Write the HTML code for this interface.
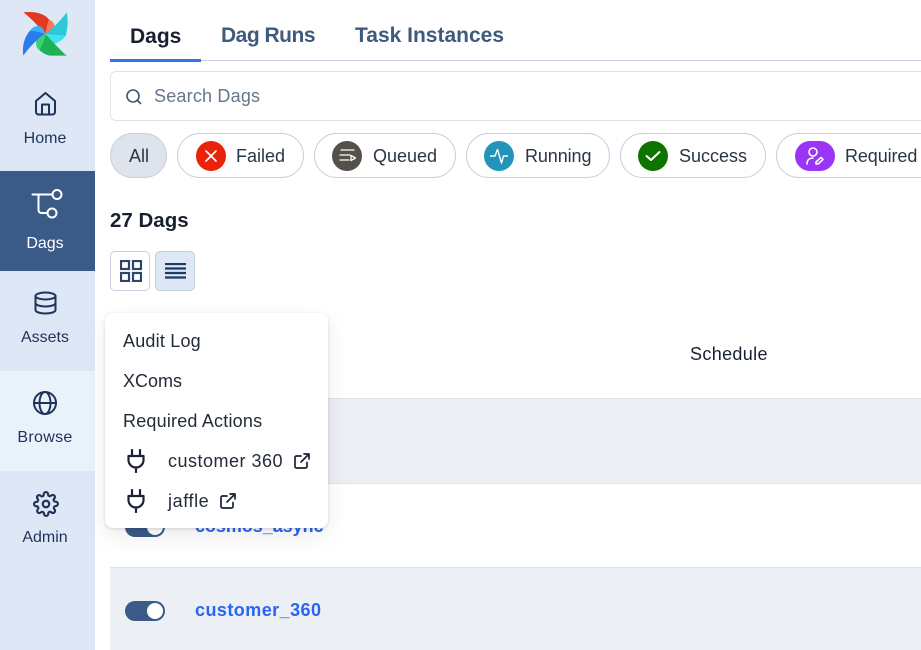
<!DOCTYPE html>
<html><head><meta charset="utf-8"><style>
html,body{margin:0;padding:0;background:#fff}
body{width:921px;height:650px;overflow:hidden;position:relative;font-family:"Liberation Sans",sans-serif;color:#1a2233}
.a{position:absolute;white-space:nowrap}
.side{position:absolute;left:0;width:95px;text-align:center;color:#1f3358;font-size:16px}
.side span{position:absolute;left:0;width:90px;text-align:center}
.side svg{position:absolute;left:33px;fill:none;stroke:currentColor;stroke-width:2;stroke-linecap:round;stroke-linejoin:round}
.pill{position:absolute;top:133px;height:43px;border:1px solid #c7d0de;border-radius:23px;background:#fff}
.pill i{position:absolute;top:7px;left:17px;width:30px;height:30px;border-radius:15px;display:block}
.pill i svg{position:absolute;left:6px;top:6px;fill:none;stroke:#fff;stroke-width:2;stroke-linecap:round;stroke-linejoin:round}
.pill b{position:absolute;top:12px;font-weight:400;font-size:18px;color:#2a3545;white-space:nowrap;line-height:20px}
.mi{position:absolute;left:18px;font-size:18px;color:#232b3a;white-space:nowrap;line-height:20px;letter-spacing:.2px}
.pl{position:absolute;left:20px;fill:none;stroke:#1a2233;stroke-width:2.200;stroke-linecap:round;stroke-linejoin:round}
.ext{position:absolute;fill:none;stroke:#1a2233;stroke-width:1.700;stroke-linecap:round;stroke-linejoin:round}
.tog{position:absolute;left:125px;width:40px;height:20px;border-radius:10px;background:#3a5a87}
.tog:after{content:"";position:absolute;right:2px;top:2px;width:16px;height:16px;border-radius:8px;background:#fff}
.link{position:absolute;left:195px;font-size:18px;font-weight:700;color:#2864f5;white-space:nowrap;line-height:20px;letter-spacing:.45px}
</style></head><body>

<div class="a" style="left:0;top:0;width:95px;height:650px;background:#dee7f6"></div>
<div class="a" style="left:0;top:171px;width:95px;height:100px;background:#3a5a87"></div>
<div class="a" style="left:0;top:371px;width:95px;height:100px;background:#e9f1fb"></div>

<svg class="a" style="left:0;top:0" width="95" height="70" viewBox="0 0 285 210">
<path d="M136 102C118 82 95 55 70 37C105 33 132 40 147 58C142 75 139 90 136 102Z" fill="#e43921"/>
<path d="M136 102C139 90 142 75 147 58C157 63 165 72 164 80C160 90 150 97 136 102Z" fill="#ff7557"/>
<path d="M136 102C150 90 178 68 200 37C205 60 203 85 197 108C178 106 155 104 136 102Z" fill="#2fc6d6"/>
<path d="M136 102L197 108C188 120 172 130 158 133C150 122 143 112 136 102Z" fill="#3ee4ee"/>
<path d="M136 102C155 122 178 148 200 167L150 167C138 165 126 158 118 150C126 135 133 118 136 102Z" fill="#1fb254"/>
<path d="M136 102C133 118 126 135 118 150C110 145 106 135 109 123C118 113 128 107 136 102Z" fill="#37d46c"/>
<path d="M136 102C118 112 90 138 70 167C66 140 72 112 90 92C108 93 125 97 136 102Z" fill="#2b7bef"/>
<path d="M136 102C125 97 108 93 90 92C98 80 112 74 124 81C131 87 134 95 136 102Z" fill="#3eb0f5"/>
</svg>

<div class="side" style="top:0;height:171px">
<svg style="top:91px" width="25" height="25" viewBox="0 0 25 25"><path d="M3 10L12.500 2 22 10V21a2.500 2.500 0 0 1-2.500 2.500h-14A2.500 2.500 0 0 1 3 21z"/><path d="M9 23.500v-10h7v10"/></svg>
<span style="top:130px;line-height:18px">Home</span></div>
<div class="side" style="top:171px;height:100px;color:#fff">
<svg style="top:17px;left:30px" width="36" height="36" viewBox="0 0 36 36"><path d="M2.500 6.500H22"/><path d="M8.500 7v15a3 3 0 0 0 3 3H17"/><circle cx="27" cy="6.500" r="4.500"/><circle cx="22" cy="25" r="4.500"/></svg>
<span style="top:64px;line-height:18px">Dags</span></div>
<div class="side" style="top:271px;height:100px">
<svg style="top:20px" width="24" height="24" viewBox="0 0 24 24"><ellipse cx="12.500" cy="5" rx="10" ry="3.500"/><path d="M2.500 5v14c0 2 4.500 3.500 10 3.500s10-1.500 10-3.500V5"/><path d="M2.500 12c0 2 4.500 3.500 10 3.500s10-1.500 10-3.500"/></svg>
<span style="top:58px;line-height:18px">Assets</span></div>
<div class="side" style="top:371px;height:100px">
<svg style="top:20px" width="24" height="24" viewBox="0 0 24 24"><circle cx="12" cy="12" r="11"/><path d="M1 12h22"/><ellipse cx="12" cy="12" rx="5.500" ry="11"/></svg>
<span style="top:58px;line-height:18px;letter-spacing:.3px">Browse</span></div>
<div class="side" style="top:471px;height:100px">
<svg style="top:20px" width="26" height="26" viewBox="0 0 24 24"><circle cx="12" cy="12" r="3"/><path d="M19.400 15a1.650 1.650 0 0 0 .33 1.820l.06.06a2 2 0 1 1-2.830 2.830l-.06-.06a1.650 1.650 0 0 0-2.800 1.170V21a2 2 0 1 1-4 0v-.09A1.650 1.650 0 0 0 7.300 19.700l-.06.06a2 2 0 1 1-2.830-2.830l.06-.06a1.650 1.650 0 0 0-1.170-2.800H3a2 2 0 1 1 0-4h.09A1.650 1.650 0 0 0 4.300 7.300l-.06-.06a2 2 0 1 1 2.830-2.830l.06.06a1.650 1.650 0 0 0 2.800-1.170V3a2 2 0 1 1 4 0v.09a1.650 1.650 0 0 0 2.800 1.170l.06-.06a2 2 0 1 1 2.830 2.830l-.06.06a1.650 1.650 0 0 0 1.170 2.800H21a2 2 0 1 1 0 4h-.09a1.650 1.650 0 0 0-1.510 1z"/></svg>
<span style="top:58px;line-height:18px">Admin</span></div>

<div class="a" style="left:110px;top:60px;width:811px;height:1px;background:#c7d0de"></div>
<div class="a" style="left:110px;top:59px;width:91px;height:3px;background:#2f74ea"></div>
<div class="a" style="left:130px;top:25px;font-size:21px;font-weight:700;line-height:24px;color:#182030">Dags</div>
<div class="a" style="left:221px;top:24px;font-size:21px;font-weight:700;line-height:24px;color:#3e5a7d;letter-spacing:-.5px">Dag Runs</div>
<div class="a" style="left:355px;top:24px;font-size:21px;font-weight:700;line-height:24px;color:#3e5a7d">Task Instances</div>

<div class="a" style="left:110px;top:71px;width:811px;height:48px;border:1px solid #dfe3ea;border-right:none;border-radius:6px 0 0 6px"></div>
<svg class="a" style="left:125px;top:88px;fill:none;stroke:#3d5573;stroke-width:1.600;stroke-linecap:round" width="18" height="18" viewBox="0 0 18 18"><circle cx="8" cy="8" r="6"/><path d="M12.500 12.500L15.500 15.500"/></svg>
<div class="a" style="left:154px;top:86px;font-size:18px;line-height:20px;color:#66768c;letter-spacing:.2px">Search Dags</div>

<div class="pill" style="left:110px;width:55px;background:#dee3ec"><b style="left:18px;color:#2a3545">All</b></div>
<div class="pill" style="left:177px;width:125px"><i style="left:18px;background:#ea2208"><svg style="stroke-width:1.700" width="18" height="18" viewBox="0 0 18 18"><path d="M4 4l10 10M14 4L4 14"/></svg></i><b style="left:58px">Failed</b></div>
<div class="pill" style="left:314px;width:140px"><i style="background:#55504a"><svg style="stroke-width:1.300;left:7px" width="18" height="18" viewBox="0 0 18 18"><path d="M2 3h13M1 8h10M1 13h9"/><path d="M12 8.500l4.500 2.500-4.500 2.500z"/></svg></i><b style="left:58px">Queued</b></div>
<div class="pill" style="left:466px;width:142px"><i style="background:#2294bc"><svg style="stroke-width:1.400" width="18" height="18" viewBox="0 0 18 18"><path d="M.5 9H5l2.500-6.500 4 13.500 2-7h4"/></svg></i><b style="left:58px;letter-spacing:-.1px">Running</b></div>
<div class="pill" style="left:620px;width:144px"><i style="background:#0e7400"><svg width="18" height="18" viewBox="0 0 18 18"><path d="M2.500 9l4.500 4 8.500-8"/></svg></i><b style="left:58px">Success</b></div>
<div class="pill" style="left:776px;width:145px;border-right:none;border-radius:23px 0 0 23px"><i style="left:18px;background:#9a34f7;width:40px"><svg style="left:11px;stroke-width:1.600" width="18" height="18" viewBox="0 0 18 18"><circle cx="7" cy="5" r="4"/><path d="M1 17c0-4 2.500-6 6-6"/><path d="M10 15l5-4.500 2 2-5 4.500h-2z"/></svg></i><b style="left:68px;letter-spacing:-.1px">Required</b></div>

<div class="a" style="left:110px;top:209px;font-size:20.500px;font-weight:700;line-height:24px;color:#182030">27 Dags</div>
<div class="a" style="left:110px;top:251px;width:38px;height:38px;border:1px solid #c7d0de;border-radius:5px"></div>
<svg class="a" style="left:120px;top:260px;fill:none;stroke:#2b446c;stroke-width:2.200" width="22" height="22" viewBox="0 0 22 22"><rect x="1" y="1" width="8" height="8"/><rect x="13" y="1" width="8" height="8"/><rect x="1" y="13" width="8" height="8"/><rect x="13" y="13" width="8" height="8"/></svg>
<div class="a" style="left:155px;top:251px;width:38px;height:38px;border:1px solid #c7d0de;border-radius:5px;background:#dee7f6"></div>
<svg class="a" style="left:165px;top:263px;stroke:#1f3a66;stroke-width:2.300" width="22" height="16" viewBox="0 0 22 16"><path d="M0 1h21M0 5.500h21M0 10h21M0 14.500h21"/></svg>

<div class="a" style="left:690px;top:344px;font-size:18px;line-height:20px;color:#182030;letter-spacing:.35px">Schedule</div>
<div class="a" style="left:110px;top:398px;width:811px;height:85px;background:#eceff4;border-top:1px solid #dee2ea;box-sizing:border-box"></div>
<div class="a" style="left:110px;top:483px;width:811px;height:1px;background:#dee2ea"></div>
<div class="a" style="left:110px;top:567px;width:811px;height:83px;background:#eceff4;border-top:1px solid #dee2ea;box-sizing:border-box"></div>

<div class="tog" style="top:517px"></div>
<div class="link" style="top:516px;letter-spacing:-.05px">cosmos_async</div>
<div class="tog" style="top:601px"></div>
<div class="link" style="top:600px">customer_360</div>

<div class="a" style="left:105px;top:313px;width:223px;height:215px;background:#fff;border-radius:8px;box-shadow:0 1px 3px rgba(0,0,0,.14),0 8px 24px rgba(0,0,0,.08)">
<div class="mi" style="top:18px">Audit Log</div>
<div class="mi" style="top:58px;letter-spacing:0">XComs</div>
<div class="mi" style="top:98px">Required Actions</div>
<svg class="pl" style="top:136px" width="22" height="24" viewBox="0 0 22 24"><path d="M7 1v6M15 1v6M3.500 7h15v4a7.500 7.500 0 0 1-15 0zM11 18.500V23"/></svg>
<div class="mi" style="top:138px;left:63px;letter-spacing:.5px">customer 360</div>
<svg class="ext" style="left:189px;top:140px" width="16" height="16" viewBox="0 0 16 16"><path d="M13 9.500V13.500a1.500 1.500 0 0 1-1.500 1.500H2.500A1.500 1.500 0 0 1 1 13.500V4.500A1.500 1.500 0 0 1 2.500 3H7M10 1h5v5M15 1L7 9"/></svg>
<svg class="pl" style="top:176px" width="22" height="24" viewBox="0 0 22 24"><path d="M7 1v6M15 1v6M3.500 7h15v4a7.500 7.500 0 0 1-15 0zM11 18.500V23"/></svg>
<div class="mi" style="top:178px;left:63px;letter-spacing:.6px">jaffle</div>
<svg class="ext" style="left:115px;top:180px" width="16" height="16" viewBox="0 0 16 16"><path d="M13 9.500V13.500a1.500 1.500 0 0 1-1.500 1.500H2.500A1.500 1.500 0 0 1 1 13.500V4.500A1.500 1.500 0 0 1 2.500 3H7M10 1h5v5M15 1L7 9"/></svg>
</div>
</body></html>
